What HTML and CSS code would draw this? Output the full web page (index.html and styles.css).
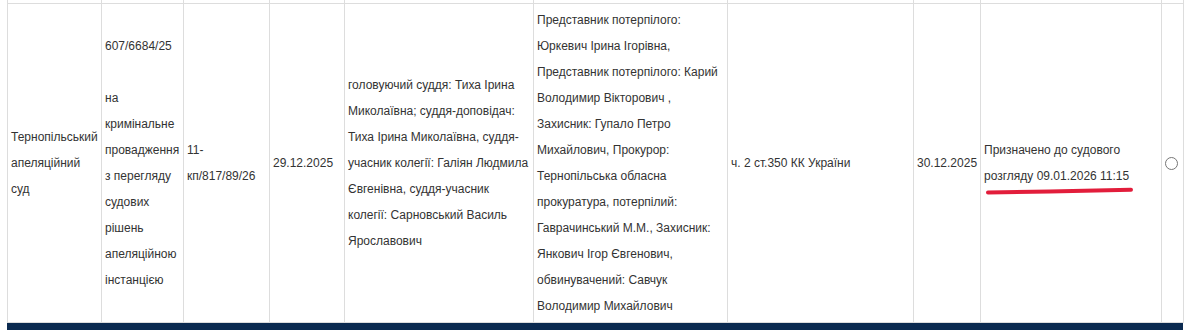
FILE: index.html
```html
<!DOCTYPE html>
<html lang="uk">
<head>
<meta charset="utf-8">
<link rel="stylesheet" href="styles.css">
</head>
<body>
<div class="page">
  <table class="cases">
    <colgroup>
      <col class="c1"><col class="c2"><col class="c3"><col class="c4"><col class="c5">
      <col class="c6"><col class="c7"><col class="c8"><col class="c9"><col class="c10">
    </colgroup>
    <tbody>
      <tr class="stub"><td></td><td></td><td></td><td></td><td></td><td></td><td></td><td></td><td></td><td></td></tr>
      <tr class="row">
        <td>Тернопільський апеляційний суд</td>
        <td>607/6684/25<br><br>на кримінальне провадження з перегляду судових рішень апеляційною інстанцією</td>
        <td>11-кп/817/89/26</td>
        <td>29.12.2025</td>
        <td>головуючий суддя: Тиха Ірина Миколаївна; суддя-доповідач: Тиха Ірина Миколаївна, суддя-учасник колегії: Галіян Людмила Євгенівна, суддя-учасник колегії: Сарновський Василь Ярославович</td>
        <td>Представник потерпілого: Юркевич Ірина Ігорівна, Представник потерпілого: Карий Володимир Вікторович , Захисник: Гупало Петро Михайлович, Прокурор: Тернопільська обласна прокуратура, потерпілий: Гаврачинський М.М., Захисник: Янкович Ігор Євгенович, обвинувачений: Савчук Володимир Михайлович</td>
        <td>ч. 2 ст.350 КК України</td>
        <td>30.12.2025</td>
        <td class="status"><span class="mark">Призначено до судового розгляду 09.01.2026 11:15<svg class="scribble" width="150" height="10" viewBox="0 0 150 10"><path d="M3 6.5 C 50 5.5, 100 5, 146 3.8" stroke="#e21d3b" stroke-width="4" stroke-linecap="round" fill="none"/></svg></span></td>
        <td class="sel"><span class="radio"></span></td>
      </tr>
    </tbody>
  </table>
  <div class="footer-bar"></div>
</div>
</body>
</html>
```
FILE: styles.css
```css
html, body {
  margin: 0;
  padding: 0;
  background: #fff;
}
.page {
  padding-left: 7px;
  width: 1176px;
  font-family: "Liberation Sans", Arial, sans-serif;
  font-size: 12px;
  color: #333;
}
.cases {
  border-collapse: collapse;
  table-layout: fixed;
  width: 1176px;
}
.c1 { width: 94px; }
.c2 { width: 82px; }
.c3 { width: 86px; }
.c4 { width: 75px; }
.c5 { width: 189px; }
.c6 { width: 194px; }
.c7 { width: 186px; }
.c8 { width: 67px; }
.c9 { width: 181px; }
.c10 { width: 22px; }
.cases td {
  border: 1px solid #ddd;
  padding: 3px 3px;
  line-height: 26px;
  vertical-align: middle;
  text-align: left;
}
.cases .stub td {
  border-top: none;
  height: 3px;
  padding: 0;
  line-height: 0;
}
.status .mark {
  position: relative;
  display: inline-block;
}
.scribble {
  position: absolute;
  left: 1px;
  top: 49px;
}
.sel {
  text-align: center;
}
.radio {
  display: inline-block;
  width: 11px;
  height: 11px;
  border: 1px solid #767676;
  border-radius: 50%;
  vertical-align: middle;
}
.footer-bar {
  height: 8px;
  background: #0b2a50;
}
```
